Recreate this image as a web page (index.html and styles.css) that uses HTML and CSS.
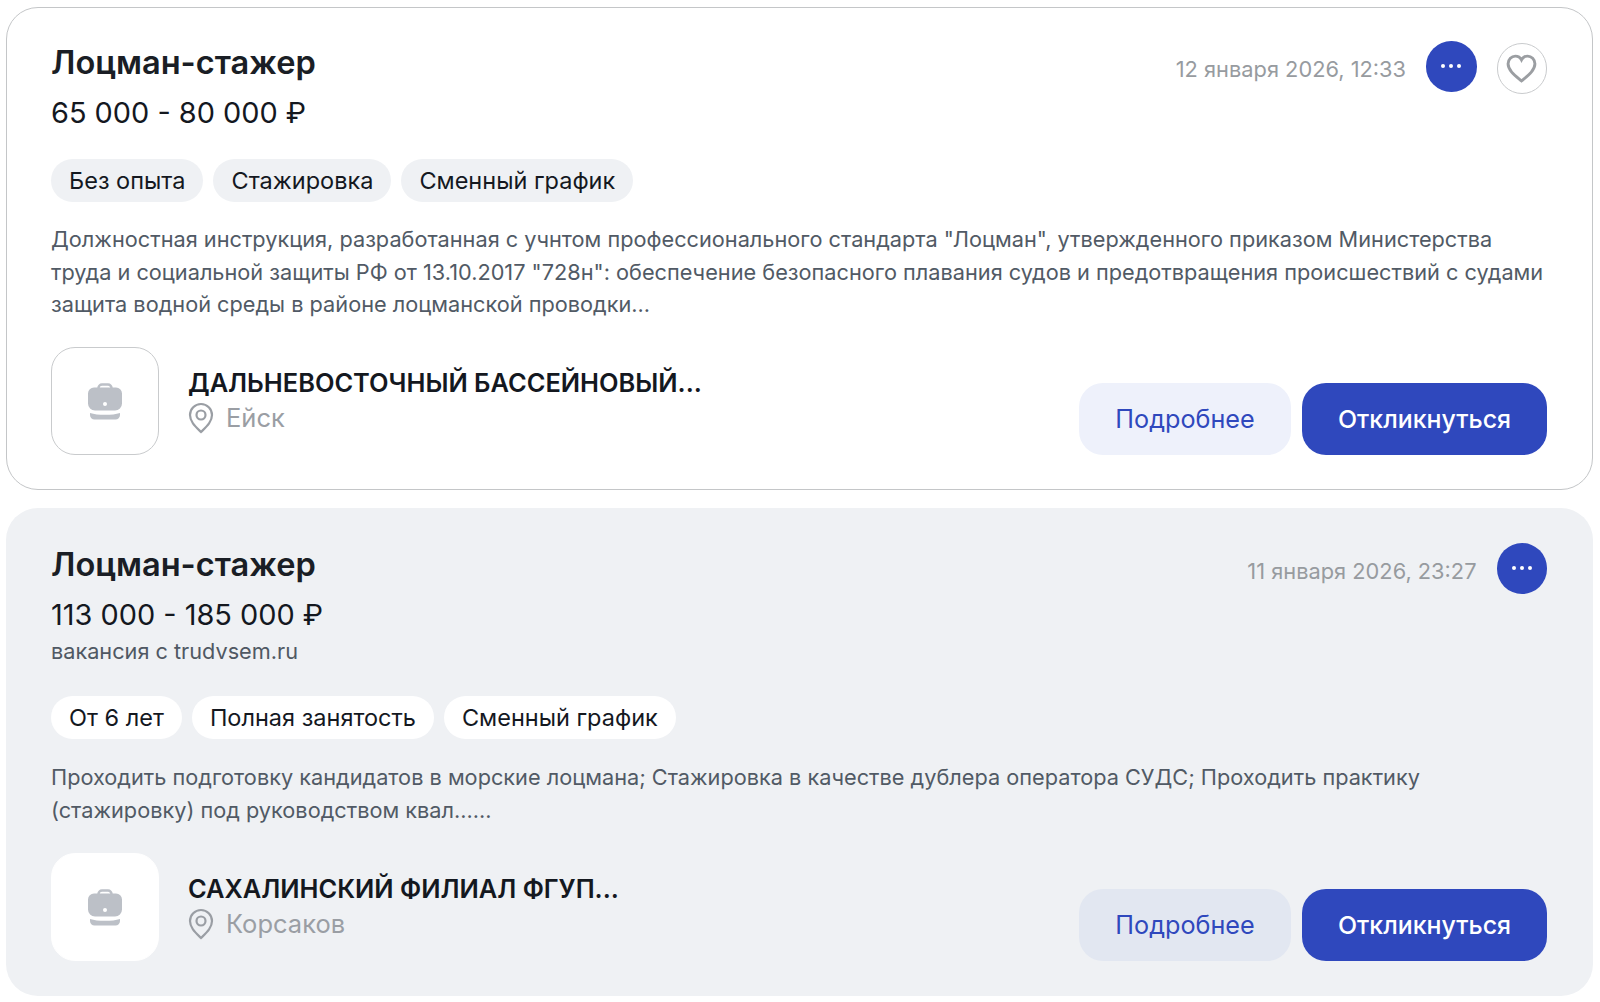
FILE: index.html
```html
<!DOCTYPE html>
<html lang="ru">
<head>
<meta charset="utf-8">
<title>Вакансии</title>
<link rel="stylesheet" href="styles.css">
</head>
<body>
<main class="list">
  <article class="card card-white">
    <header class="head">
      <div>
        <h2 class="title">Лоцман-стажер</h2>
        <p class="salary">65 000 - 80 000 ₽</p>
      </div>
      <div class="meta">
        <span class="date">12 января 2026, 12:33</span>
        <button class="more"><svg width="22" height="6" viewBox="0 0 22 6"><circle cx="3" cy="3" r="2"/><circle cx="11" cy="3" r="2"/><circle cx="19" cy="3" r="2"/></svg></button>
        <button class="fav"><svg width="31" height="29" viewBox="0 0 30 28"><path d="M15 26C9 21 2 16 2 9.500C2 5 5.500 2 9 2c2.500 0 4.800 1.300 6 3.600C16.200 3.300 18.500 2 21 2c3.500 0 7 3 7 7.500C28 16 21 21 15 26Z"/></svg></button>
      </div>
    </header>
    <div class="tags tags-a">
      <span class="tag">Без опыта</span><span class="tag">Стажировка</span><span class="tag">Сменный график</span>
    </div>
    <p class="desc">Должностная инструкция, разработанная с учнтом профессионального стандарта "Лоцман", утвержденного приказом Министерства труда и социальной защиты РФ от 13.10.2017 "728н": обеспечение безопасного плавания судов и предотвращения происшествий с судами защита водной среды в районе лоцманской проводки...</p>
    <footer class="foot">
      <div class="company">
        <div class="logo"><svg width="36" height="37" viewBox="0 0 36 37"><path class="bag-h" d="M11.500 7V5a3.500 3.500 0 0 1 3.500-3.500h6A3.500 3.500 0 0 1 24.500 5v2"/><path class="bag" d="M7 4.500h22a6 6 0 0 1 6 6v10a7 7 0 0 1-7 7H8a7 7 0 0 1-7-7v-10a6 6 0 0 1 6-6Z"/><circle class="bag-d" cx="18" cy="21" r="2"/><path class="bag" d="M3 30c4 1.300 9 1.800 15 1.800S29 31.300 33 30v2a4.500 4.500 0 0 1-4.500 4.500h-21A4.500 4.500 0 0 1 3 32Z"/></svg></div>
        <div class="org">
          <div class="org-name">ДАЛЬНЕВОСТОЧНЫЙ БАССЕЙНОВЫЙ...</div>
          <div class="city"><svg width="26" height="32" viewBox="0 0 26 32"><path d="M13 30C8 25 2 20 2 13a11 11 0 0 1 22 0c0 7-6 12-11 17Z"/><circle cx="13" cy="13" r="4.500"/></svg><span>Ейск</span></div>
        </div>
      </div>
      <div class="actions">
        <button class="btn btn-light">Подробнее</button>
        <button class="btn btn-primary">Откликнуться</button>
      </div>
    </footer>
  </article>

  <article class="card card-grey">
    <header class="head">
      <div>
        <h2 class="title">Лоцман-стажер</h2>
        <p class="salary">113 000 - 185 000 ₽</p>
        <p class="source">вакансия с trudvsem.ru</p>
      </div>
      <div class="meta">
        <span class="date">11 января 2026, 23:27</span>
        <button class="more"><svg width="22" height="6" viewBox="0 0 22 6"><circle cx="3" cy="3" r="2"/><circle cx="11" cy="3" r="2"/><circle cx="19" cy="3" r="2"/></svg></button>
      </div>
    </header>
    <div class="tags tags-b">
      <span class="tag">От 6 лет</span><span class="tag">Полная занятость</span><span class="tag">Сменный график</span>
    </div>
    <p class="desc">Проходить подготовку кандидатов в морские лоцмана; Стажировка в качестве дублера оператора СУДС; Проходить практику (стажировку) под руководством квал......</p>
    <footer class="foot">
      <div class="company">
        <div class="logo"><svg width="36" height="37" viewBox="0 0 36 37"><path class="bag-h" d="M11.500 7V5a3.500 3.500 0 0 1 3.500-3.500h6A3.500 3.500 0 0 1 24.500 5v2"/><path class="bag" d="M7 4.500h22a6 6 0 0 1 6 6v10a7 7 0 0 1-7 7H8a7 7 0 0 1-7-7v-10a6 6 0 0 1 6-6Z"/><circle class="bag-d" cx="18" cy="21" r="2"/><path class="bag" d="M3 30c4 1.300 9 1.800 15 1.800S29 31.300 33 30v2a4.500 4.500 0 0 1-4.500 4.500h-21A4.500 4.500 0 0 1 3 32Z"/></svg></div>
        <div class="org">
          <div class="org-name">САХАЛИНСКИЙ ФИЛИАЛ ФГУП...</div>
          <div class="city"><svg width="26" height="32" viewBox="0 0 26 32"><path d="M13 30C8 25 2 20 2 13a11 11 0 0 1 22 0c0 7-6 12-11 17Z"/><circle cx="13" cy="13" r="4.500"/></svg><span>Корсаков</span></div>
        </div>
      </div>
      <div class="actions">
        <button class="btn btn-light">Подробнее</button>
        <button class="btn btn-primary">Откликнуться</button>
      </div>
    </footer>
  </article>
</main>
</body>
</html>
```
FILE: styles.css
```css
* { box-sizing: border-box; }
html, body { margin: 0; background: #fff; }
body { font-family: Inter, "Liberation Sans", sans-serif; color: #14181f; }
.list { display: flex; flex-direction: column; gap: 18px; padding: 7px 7px 6px 6px; }
.card { border-radius: 32px; }
.card-white { background: #fff; border: 1.500px solid #c4c6c8; height: 483px; padding: 32px 45px 33px 44px; }
.card-grey { background: #eff1f4; height: 488px; padding: 34px 46px 33px 45px; }
.head { display: flex; justify-content: space-between; align-items: flex-start; }
.title { margin: 0; font-size: 32.600px; line-height: 45px; font-weight: 600; color: #1a1e25; }
.salary { margin: 6px 0 0; font-size: 28.900px; line-height: 44px; font-weight: 400; color: #14181f; }
.source { margin: 0; font-size: 21.700px; line-height: 28px; color: #4f5863; }
.meta { display: flex; align-items: center; gap: 20px; margin-top: 1px; }
.date { font-size: 21.800px; color: #979b9f; margin-top: 1px; }
.more { width: 50.500px; height: 50.500px; border: 0; border-radius: 50%; background: #2f48bd; display: flex; align-items: center; justify-content: center; padding: 0; margin-bottom: 4px; }
.more svg { fill: #fff; }
.fav { width: 50.500px; height: 50.500px; border: 1.500px solid #c9cbcd; border-radius: 50%; background: #fff; display: flex; align-items: center; justify-content: center; padding: 0; }
.fav svg { fill: none; stroke: #9b9ea2; stroke-width: 2.800; }
.tags { display: flex; gap: 10px; }
.tags-a { margin-top: 24px; }
.tags-b { margin-top: 31px; }
.tag { height: 43px; padding: 0 18px; border-radius: 22px; background: #eff1f4; font-size: 23.500px; line-height: 43px; color: #14181f; }
.card-grey .tag { background: #fff; }
.desc { margin: 21px 0 0; font-size: 21.730px; line-height: 32.700px; color: #515a65; }
.card-grey .desc { margin-top: 22px; }
.foot { display: flex; justify-content: space-between; align-items: flex-end; }
.card-white .foot { margin-top: 26px; }
.card-grey .foot { margin-top: 27px; }
.company { display: flex; align-items: center; gap: 29px; }
.logo { width: 108px; height: 108px; border-radius: 24px; display: flex; align-items: center; justify-content: center; background: #fff; border: 1.500px solid #c9cbcd; }
.card-grey .logo { border-color: #fff; }
.bag { fill: #bcc0c7; }
.bag-h { fill: none; stroke: #bcc0c7; stroke-width: 2.500; }
.bag-d { fill: #fff; }
.org { display: flex; flex-direction: column; }
.org-name { font-size: 25.400px; line-height: 34px; font-weight: 600; color: #14181f; }
.city { display: flex; align-items: center; gap: 12px; font-size: 25.500px; line-height: 36px; color: #9a9ea4; }
.city svg { fill: none; stroke: #9a9ea4; stroke-width: 2.200; }
.actions { display: flex; gap: 11px; }
.btn { height: 72px; border: 0; border-radius: 24px; font-family: inherit; font-size: 24.900px; font-weight: 500; padding: 0; }
.btn-light { width: 212px; background: #eef1fb; color: #2f48bd; font-weight: 400; font-size: 25.200px; }
.card-grey .btn-light { background: #e2e7f1; }
.btn-primary { width: 245px; background: #2f48bd; color: #fff; }
```
